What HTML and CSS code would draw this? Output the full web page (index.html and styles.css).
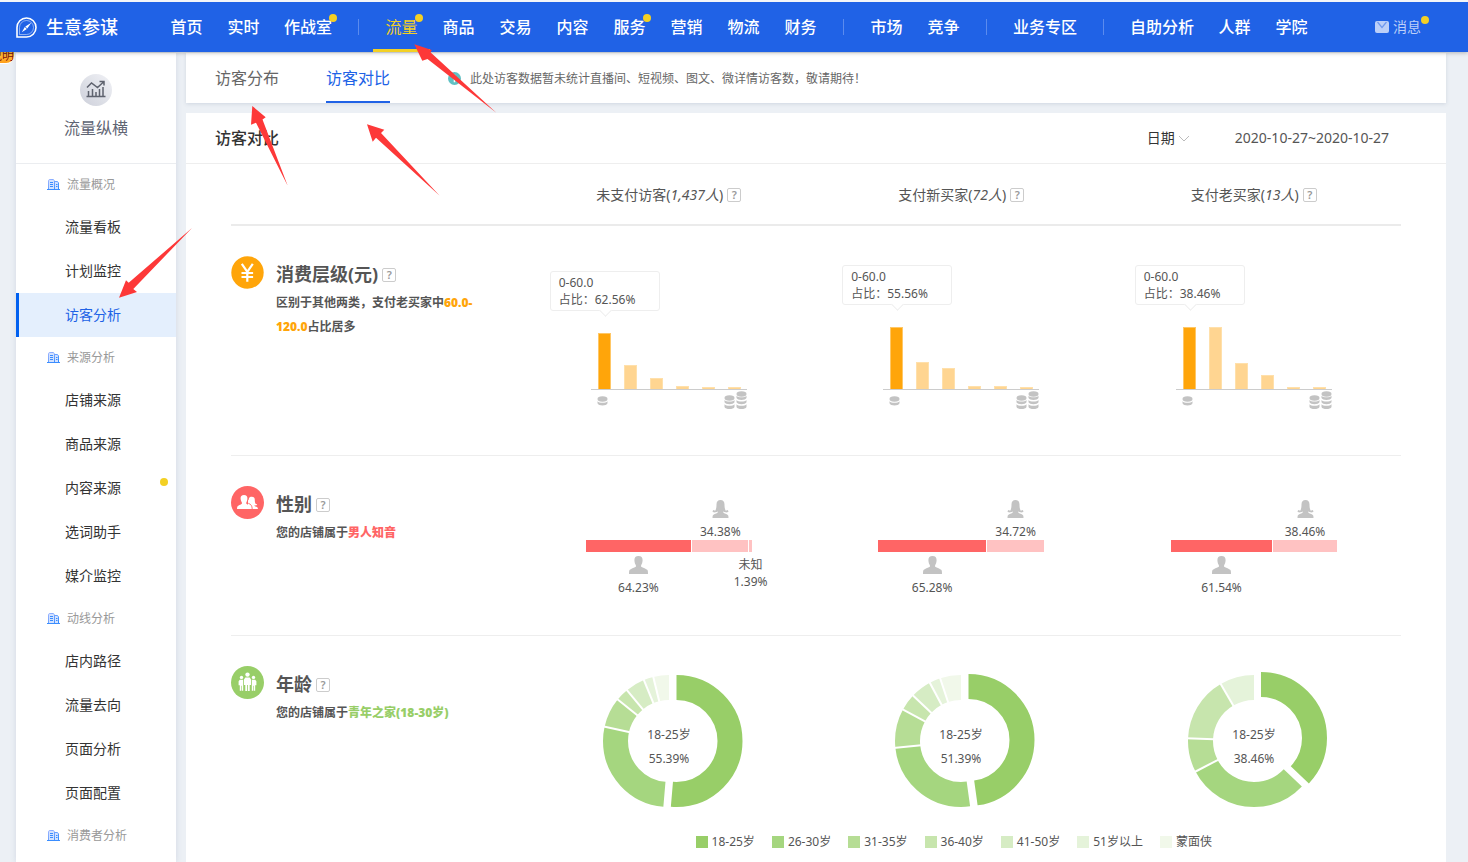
FILE: index.html
```html
<!DOCTYPE html>
<html lang="zh-CN">
<head>
<meta charset="utf-8">
<title>生意参谋 - 访客对比</title>
<link rel="stylesheet" href="styles.css">
</head>
<body>
<svg class="sprite" aria-hidden="true">
  <defs>
    <linearGradient id="tower" x1="0" y1="0" x2="1" y2="1"><stop offset="0" stop-color="#9db4ff"/><stop offset="1" stop-color="#2f8bff"/></linearGradient>
  </defs>
  <symbol id="i-building" viewBox="0 0 13 12">
    <path d="M1 10.500V1.500L2 .5h4.500l1 1V3h3l1.500 1.500v6z" fill="#d3e2ff"/>
    <path d="M1.500 10.500V1.800L2.300 .5h3.900l1.300 1.300v8.700M7.500 2.500h3l1 1.500v6.500" fill="none" stroke="url(#tower)"/>
    <path d="M0 10.500h13M3 3.500h3M3 5.500h3M3 7.500h3M9 5.500h1.500M9 7.500h1.500" fill="none" stroke="#3a8dff"/>
  </symbol>
  <symbol id="i-coin" viewBox="0 0 11 10">
    <ellipse cx="5.500" cy="3" rx="5" ry="2.800"/><path d="M.5 5.300c1.500 2 8.500 2 10 0V7.200c-1 2.900-9 2.900-10 0z"/>
  </symbol>
  <symbol id="i-coins" viewBox="0 0 23 19">
    <ellipse cx="5.500" cy="7" rx="5" ry="2.800"/>
    <path d="M.5 9c1.500 2 8.500 2 10 0v2.300c-1 2.600-9 2.600-10 0zM.5 13.200c1.500 2 8.500 2 10 0v2.800c-1 2.800-9 2.800-10 0z"/>
    <ellipse cx="17.500" cy="3" rx="5" ry="2.800"/>
    <path d="M12.500 4.800c1.500 2 8.500 2 10 0v2.300c-1 2.600-9 2.600-10 0zM12.500 9c1.500 2 8.500 2 10 0v2.300c-1 2.600-9 2.600-10 0zM12.500 13.200c1.500 2 8.500 2 10 0v2.800c-1 2.800-9 2.800-10 0z"/>
  </symbol>
  <symbol id="i-male" viewBox="0 0 19 18">
    <path d="M9.500 0c2.800 0 4.200 1.500 4.100 4.200-.1 2.200-.7 3.900-1.500 5.100v1.400c1.800 1.200 5.300 1.900 6.400 3.400.4.700.5 2.200.5 3.900H0c0-1.700.1-3.200.5-3.900 1.100-1.500 4.600-2.200 6.400-3.400V9.300C6.100 8.100 5.500 6.400 5.400 4.200 5.300 1.500 6.700 0 9.500 0z"/>
  </symbol>
  <symbol id="i-female" viewBox="0 0 17 18">
    <path d="M8.500 0c2.700 0 4 1.700 4 4.500 0 2.600.3 4.700 1.300 6.200l1.900-.6.900 1.300-1.600 1.100-2.800-.6-.8-.6v1.500c1.800.9 4.300 1.600 4.800 2.600.2.600.3 1.500.3 2.600H.5c0-1.100.1-2 .3-2.600.5-1 3-1.700 4.800-2.600v-1.500l-.8.6-2.800.6L.4 11.400l.9-1.300 1.900.6c1-1.500 1.300-3.600 1.300-6.200C4.500 1.700 5.800 0 8.500 0z"/>
  </symbol>
</svg>

<header class="topbar">
  <a class="brand" href="#">
    <svg width="21" height="21" viewBox="0 0 21 21" fill="none" stroke="#fff"><path d="M1 20V10.500A9.500 9.500 0 1 1 10.500 20z" stroke-width="1.600"/><path d="M3.500 17.500v-7a7 7 0 1 1 7 7z" stroke-width=".7" opacity=".7"/><path d="M15.300 5.800 9.300 9.600l2 2zM5.800 15.300l3-5.200 2 2z" fill="#fff" stroke="none"/></svg>
    生意参谋
  </a>
  <nav class="nav">
    <a href="#">首页</a><a href="#">实时</a><a href="#"><span class="dotted">作战室</span></a>
    <i class="sep"></i>
    <a class="on" href="#"><span class="dotted">流量</span></a><a href="#">商品</a><a href="#">交易</a><a href="#">内容</a><a href="#"><span class="dotted">服务</span></a><a href="#">营销</a><a href="#">物流</a><a href="#">财务</a>
    <i class="sep"></i>
    <a href="#">市场</a><a href="#">竞争</a>
    <i class="sep"></i>
    <a href="#">业务专区</a>
    <i class="sep"></i>
    <a href="#">自助分析</a><a href="#">人群</a><a href="#">学院</a>
  </nav>
  <a class="message" href="#">
    <svg width="14" height="12" viewBox="0 0 14 12"><rect width="14" height="12" rx="2" fill="#bccff8"/><path d="m2.500 1 4.500 5.500L11.500 1" fill="none" stroke="#6f98ef" stroke-width="1.200"/></svg>
    <span class="dotted">消息</span>
  </a>
</header>

<div class="flag" aria-hidden="true"><span>说明</span></div>

<div class="page">
  <aside class="side">
    <div class="side-head">
      <svg width="32" height="32" viewBox="0 0 32 32"><defs><linearGradient id="disc" x1="1" y1="0" x2="0" y2="1"><stop offset="0" stop-color="#f1f2f6"/><stop offset="1" stop-color="#cdd0da"/></linearGradient></defs><circle cx="16" cy="16" r="16" fill="url(#disc)"/><path d="M6.500 22.500h19M8.500 22v-5M12.500 22v-7M16 22v-4M19.500 22v-7M23 22v-9M7 13.500l4.500-4.500 6 4.500 6-5.500M19.500 7.500h4.500v4" fill="none" stroke="#5e626e" stroke-width="1.500"/></svg>
      <span>流量纵横</span>
    </div>
    <nav>
      <h2><svg width="13" height="12"><use href="#i-building"/></svg>流量概况</h2>
      <a href="#">流量看板</a><a href="#">计划监控</a><a class="on" href="#">访客分析</a>
      <h2><svg width="13" height="12"><use href="#i-building"/></svg>来源分析</h2>
      <a href="#">店铺来源</a><a href="#">商品来源</a><a class="new" href="#">内容来源</a><a href="#">选词助手</a><a href="#">媒介监控</a>
      <h2><svg width="13" height="12"><use href="#i-building"/></svg>动线分析</h2>
      <a href="#">店内路径</a><a href="#">流量去向</a><a href="#">页面分析</a><a href="#">页面配置</a>
      <h2><svg width="13" height="12"><use href="#i-building"/></svg>消费者分析</h2>
    </nav>
  </aside>

  <main class="main">
    <div class="tabs">
      <a href="#">访客分布</a>
      <a class="on" href="#">访客对比</a>
      <p class="notice"><svg width="13" height="13" viewBox="0 0 13 13"><circle cx="6.500" cy="6.500" r="6.500" fill="#5fc1c4"/><path d="M6.500 2.800v1.600M6.500 5.500v4.700" stroke="#fff" stroke-width="1.600"/></svg>此处访客数据暂未统计直播间、短视频、图文、微详情访客数，敬请期待！</p>
    </div>

    <section class="panel">
      <div class="panel-head">
        <h1>访客对比</h1>
        <button class="period" type="button">日期<svg width="12" height="7" viewBox="0 0 12 7"><path d="m1 1 5 5 5-5" fill="none" stroke="#bbb"/></svg></button>
        <time>2020-10-27~2020-10-27</time>
      </div>

      <table class="compare">
        <thead>
          <tr>
            <td></td>
            <th>未支付访客(<em>1,437人</em>)<button class="help" type="button">?</button></th>
            <th>支付新买家(<em>72人</em>)<button class="help" type="button">?</button></th>
            <th>支付老买家(<em>13人</em>)<button class="help" type="button">?</button></th>
          </tr>
        </thead>
        <tbody>
          <tr class="row-spend">
            <th>
              <div class="topic">
                <svg width="33" height="33" viewBox="0 0 33 33"><circle cx="16.500" cy="16.500" r="16.200" fill="#ffa50a"/><path d="M10.800 7.800l5.500 8 5.500-8M16.300 15.500v10.300M10.500 17h11.600M10.500 21h11.600" fill="none" stroke="#fff" stroke-width="2.200"/></svg>
                <div><h3>消费层级(元)<button class="help" type="button">?</button></h3><p>区别于其他两类，支付老买家中<b class="orange">60.0-120.0</b>占比居多</p></div>
              </div>
            </th>
            <td>
              <div class="chart">
                <div class="bars"><i class="hot" style="height:56px"><span class="tip">0-60.0<br>占比：62.56%</span></i><i style="height:24px"></i><i style="height:11px"></i><i style="height:3px"></i><i style="height:2px"></i><i style="height:2px"></i></div>
                <div class="axis"><svg width="11" height="10"><use href="#i-coin"/></svg><svg width="23" height="19"><use href="#i-coins"/></svg></div>
              </div>
            </td>
            <td>
              <div class="chart">
                <div class="bars"><i class="hot" style="height:62px"><span class="tip">0-60.0<br>占比：55.56%</span></i><i style="height:27px"></i><i style="height:21px"></i><i style="height:3px"></i><i style="height:3px"></i><i style="height:2px"></i></div>
                <div class="axis"><svg width="11" height="10"><use href="#i-coin"/></svg><svg width="23" height="19"><use href="#i-coins"/></svg></div>
              </div>
            </td>
            <td>
              <div class="chart">
                <div class="bars"><i class="hot" style="height:62px"><span class="tip">0-60.0<br>占比：38.46%</span></i><i style="height:62px"></i><i style="height:26px"></i><i style="height:14px"></i><i style="height:2px"></i><i style="height:2px"></i></div>
                <div class="axis"><svg width="11" height="10"><use href="#i-coin"/></svg><svg width="23" height="19"><use href="#i-coins"/></svg></div>
              </div>
            </td>
          </tr>
          <tr class="row-gender">
            <th>
              <div class="topic">
                <svg width="33" height="33" viewBox="0 0 33 33"><circle cx="16.500" cy="16.500" r="16.500" fill="#ff6565"/><path d="M20.800 10.800c2 0 3 1.200 3 3.200 0 1.800.3 3 1 3.900l1.400.3-.6 1-2.200.2v.6c1.400.6 2.900.9 3.300 1.700.1.300.2.700.2 1.300H17v-8.500c.6-.5.8-1.100.9-2 .2-1.100 1.200-1.700 2.900-1.700z" fill="#fff"/><path d="M13 9c2.400 0 3.500 1.300 3.400 3.600-.1 1.800-.5 3-1.100 3.900v1.200c1.400 1.100 4.100 1.500 4.900 2.700.3.700.4 1.600.4 2.600H6c0-1 .1-1.900.4-2.600.8-1.200 3.300-1.600 4.500-2.700v-1.200c-.6-.9-1.200-2.100-1.300-3.900C9.500 10.300 10.600 9 13 9z" fill="#fff"/><path d="M17.300 17.300c2.800 1 3.800 2.500 3.900 5.700" fill="none" stroke="#ff6565" stroke-width=".9"/></svg>
                <div><h3>性别<button class="help" type="button">?</button></h3><p>您的店铺属于<b class="red">男人知音</b></p></div>
              </div>
            </th>
            <td>
              <div class="split">
                <div class="part male" style="flex-grow:64.23"><div class="up"></div><i></i><div class="down"><svg width="19" height="18"><use href="#i-male"/></svg>64.23%</div></div>
                <div class="part female" style="flex-grow:34.38"><div class="up"><svg width="17" height="18"><use href="#i-female"/></svg>34.38%</div><i></i></div>
                <div class="part unknown" style="flex-grow:1.39"><div class="up"></div><i></i><div class="down"><span>未知</span>1.39%</div></div>
              </div>
            </td>
            <td>
              <div class="split">
                <div class="part male" style="flex-grow:65.28"><div class="up"></div><i></i><div class="down"><svg width="19" height="18"><use href="#i-male"/></svg>65.28%</div></div>
                <div class="part female" style="flex-grow:34.72"><div class="up"><svg width="17" height="18"><use href="#i-female"/></svg>34.72%</div><i></i></div>
              </div>
            </td>
            <td>
              <div class="split">
                <div class="part male" style="flex-grow:61.54"><div class="up"></div><i></i><div class="down"><svg width="19" height="18"><use href="#i-male"/></svg>61.54%</div></div>
                <div class="part female" style="flex-grow:38.46"><div class="up"><svg width="17" height="18"><use href="#i-female"/></svg>38.46%</div><i></i></div>
              </div>
            </td>
          </tr>
          <tr class="row-age">
            <th>
              <div class="topic">
                <svg width="33" height="33" viewBox="0 0 33 33"><circle cx="16.500" cy="16.500" r="16.500" fill="#98ce68"/><g fill="#fff"><circle cx="16.500" cy="8.600" r="2.200"/><circle cx="10.500" cy="11.400" r="1.700"/><circle cx="22.500" cy="11.400" r="1.700"/><path d="M14.300 11.500h4.400l1.300 2v5.500h-1.300V25h-1.800v-6h-.8v6h-1.800v-6H13v-5.500zM8.800 13.800h3.400v11h-1.400v-5h-.6v5H8.800v-5.500H7.600v-4zM20.800 13.800h3.400l1.200 1.500v4h-1.200v5.500h-1.400v-5h-.6v5h-1.400z"/></g></svg>
                <div><h3>年龄<button class="help" type="button">?</button></h3><p>您的店铺属于<b class="green">青年之家(18-30岁)</b></p></div>
              </div>
            </th>
            <td>
              <svg class="donut" width="150" height="150" viewBox="-75 -75 150 150">
                <g class="ring">
                  <circle class="a2" r="53.500" pathLength="360" stroke-dasharray="97.600 262.400" stroke-dashoffset="-185"/>
                  <circle class="a3" r="53.500" pathLength="360" stroke-dasharray="26.400 333.600" stroke-dashoffset="-282.600"/>
                  <circle class="a4" r="53.500" pathLength="360" stroke-dasharray="11.400 348.600" stroke-dashoffset="-309"/>
                  <circle class="a5" r="53.500" pathLength="360" stroke-dasharray="17.200 342.800" stroke-dashoffset="-320.400"/>
                  <circle class="a6" r="53.500" pathLength="360" stroke-dasharray="8.600 351.400" stroke-dashoffset="-337.600"/>
                  <circle class="a7" r="53.500" pathLength="360" stroke-dasharray="13.800 346.200" stroke-dashoffset="-346.200"/>
                </g>
                <g class="gaps"><path d="M0-40V-68" transform="rotate(282.600)"/><path d="M0-40V-68" transform="rotate(309)"/><path d="M0-40V-68" transform="rotate(320.400)"/><path d="M0-40V-68" transform="rotate(337.600)"/><path d="M0-40V-68" transform="rotate(346.200)"/></g>
                <g class="ring" transform="translate(7.500 0)"><circle class="a1" r="53.500" pathLength="360" stroke-dasharray="185 175"/></g>
                <text y="-2">18-25岁</text><text y="22">55.39%</text>
              </svg>
            </td>
            <td>
              <svg class="donut" width="150" height="150" viewBox="-75 -75 150 150">
                <g class="ring">
                  <circle class="a2" r="53.500" pathLength="360" stroke-dasharray="92 268" stroke-dashoffset="-172"/>
                  <circle class="a3" r="53.500" pathLength="360" stroke-dasharray="34.500 325.500" stroke-dashoffset="-264"/>
                  <circle class="a4" r="53.500" pathLength="360" stroke-dasharray="15 345" stroke-dashoffset="-298.500"/>
                  <circle class="a5" r="53.500" pathLength="360" stroke-dasharray="18.300 341.700" stroke-dashoffset="-313.500"/>
                  <circle class="a6" r="53.500" pathLength="360" stroke-dasharray="9.800 350.200" stroke-dashoffset="-331.800"/>
                  <circle class="a7" r="53.500" pathLength="360" stroke-dasharray="18.400 341.600" stroke-dashoffset="-341.600"/>
                </g>
                <g class="gaps"><path d="M0-40V-68" transform="rotate(264)"/><path d="M0-40V-68" transform="rotate(298.500)"/><path d="M0-40V-68" transform="rotate(313.500)"/><path d="M0-40V-68" transform="rotate(331.800)"/><path d="M0-40V-68" transform="rotate(341.600)"/></g>
                <g class="ring" transform="translate(7.500 -1)"><circle class="a1" r="53.500" pathLength="360" stroke-dasharray="172 188"/></g>
                <text y="-2">18-25岁</text><text y="22">51.39%</text>
              </svg>
            </td>
            <td>
              <svg class="donut" width="150" height="150" viewBox="-75 -75 150 150">
                <g class="ring">
                  <circle class="a2" r="53.500" pathLength="360" stroke-dasharray="108.900 251.100" stroke-dashoffset="-133.500"/>
                  <circle class="a3" r="53.500" pathLength="360" stroke-dasharray="30 330" stroke-dashoffset="-242.400"/>
                  <circle class="a4" r="53.500" pathLength="360" stroke-dasharray="57.300 302.700" stroke-dashoffset="-272.400"/>
                  <circle class="a6" r="53.500" pathLength="360" stroke-dasharray="30.300 329.700" stroke-dashoffset="-329.700"/>
                </g>
                <g class="gaps"><path d="M0-40V-68" transform="rotate(242.400)"/><path d="M0-40V-68" transform="rotate(272.400)"/><path d="M0-40V-68" transform="rotate(329.700)"/></g>
                <g class="ring" transform="translate(7 -3)"><circle class="a1" r="53.500" pathLength="360" stroke-dasharray="133.500 226.500"/></g>
                <text y="-2">18-25岁</text><text y="22">38.46%</text>
              </svg>
            </td>
          </tr>
        </tbody>
        <tfoot>
          <tr>
            <td></td>
            <td colspan="3">
              <ul class="legend">
                <li><i class="a1"></i>18-25岁</li><li><i class="a2"></i>26-30岁</li><li><i class="a3"></i>31-35岁</li><li><i class="a4"></i>36-40岁</li><li><i class="a5"></i>41-50岁</li><li><i class="a6"></i>51岁以上</li><li><i class="a7"></i>蒙面侠</li>
              </ul>
            </td>
          </tr>
        </tfoot>
      </table>
    </section>
  </main>
</div>

<svg class="arrows" width="500" height="300" viewBox="0 0 500 300" aria-hidden="true">
  <path d="M414.300 44.300 431.700 50l-1 2.500 65.600 60.200L427.500 59l-5.200 1.800z"/>
  <path d="M252.300 106l13.400 11.300-3.200 2.200 25.200 66.200L256 122.700l-5 2z"/>
  <path d="M367 124.300l17.300 5.500-3.300 3.200 58.700 62.700-63.700-58-3.300 4z"/>
  <path d="M119 297.700l7-17.400 2.700 2.400L192 228l-58.700 61 3.700 3z"/>
</svg>
</body>
</html>
```
FILE: styles.css
```css
* { box-sizing: border-box; }

body {
  margin: 0;
  min-height: 100vh;
  display: flex;
  flex-direction: column;
  position: relative;
  background: #ecf0f5;
  color: #555;
  font: 12px/17px "Noto Sans", "Noto Sans CJK SC", sans-serif;
}

a { color: inherit; text-decoration: none; }
h1, h2, h3, p, ul { margin: 0; padding: 0; }
i, em { display: inline-block; }
button { padding: 0; border: 0; background: none; font: inherit; color: inherit; }
.sprite { position: absolute; width: 0; height: 0; }

/* top navigation */
.topbar {
  display: flex;
  align-items: center;
  height: 52px;
  padding: 0 42px 0 16px;
  border-top: 2px solid #f3f5f8;
  background: #2062e6;
  box-shadow: 0 1px 4px rgba(0, 0, 0, .25);
  color: #fff;
  position: relative;
  z-index: 2;
}
.brand {
  display: flex;
  align-items: center;
  gap: 9px;
  width: 142px;
  font-size: 18px;
  font-weight: 500;
  line-height: 24px;
  white-space: nowrap;
}
.nav { display: flex; align-items: center; }
.nav a {
  min-width: 57px;
  height: 50px;
  padding: 0 12px;
  border-bottom: 3px solid transparent;
  font-size: 16px;
  font-weight: 500;
  line-height: 50px;
  text-align: center;
  white-space: nowrap;
}
.nav a.on { border-color: #f3d024; color: #f3d024; font-weight: 400; }
.sep { width: 1px; height: 16px; margin: 0 14px; background: #5b8bee; }
.dotted { position: relative; }
.dotted::after {
  content: "";
  position: absolute;
  top: -2px;
  right: -5px;
  width: 8px;
  height: 8px;
  border-radius: 50%;
  background: #f3d024;
}
.message {
  display: flex;
  align-items: center;
  gap: 4px;
  margin-left: auto;
  padding-right: 5px;
  color: #bccff8;
  font-size: 14px;
  line-height: 20px;
}
.message .dotted::after { top: -1px; right: -8px; }

.flag {
  position: absolute;
  top: 47px;
  left: 0;
  width: 14px;
  height: 17px;
  overflow: hidden;
  display: flex;
  justify-content: flex-end;
  border-radius: 0 0 8px 0;
  border-bottom: 1px solid #fff;
  background: linear-gradient(#ffd34d, #ff9f1a);
  color: #7a1010;
  white-space: nowrap;
}

/* page frame */
.page {
  flex: 1;
  display: flex;
  gap: 10px;
  padding: 1px 22px 0 16px;
}
.side {
  flex: 0 0 160px;
  background: #fff;
  box-shadow: 0 0 6px rgba(60, 80, 120, .14);
}
.side-head {
  display: flex;
  flex-direction: column;
  align-items: center;
  gap: 10px;
  height: 111px;
  padding-top: 21px;
  border-bottom: 1px solid #ebedf0;
  color: #5f6573;
  font-size: 16px;
  line-height: 24px;
}
.side h2 {
  display: flex;
  align-items: center;
  gap: 7px;
  height: 41px;
  padding-left: 31px;
  color: #999;
  font-size: 12px;
  font-weight: 400;
}
.side nav a {
  display: block;
  position: relative;
  height: 44px;
  padding-left: 46px;
  border-left: 3px solid transparent;
  color: #333;
  font-size: 14px;
  line-height: 44px;
}
.side nav a.on { border-color: #0060f0; background: #e4effd; color: #2062e6; }
.side nav a.new::after {
  content: "";
  position: absolute;
  top: 12px;
  right: 8px;
  width: 8px;
  height: 8px;
  border-radius: 50%;
  background: #f3d024;
}

.main { flex: 1; min-width: 0; display: flex; flex-direction: column; gap: 10px; }
.tabs {
  display: flex;
  gap: 47px;
  height: 50px;
  padding-left: 29px;
  background: #fff;
  box-shadow: 0 1px 4px rgba(60, 80, 120, .16);
  color: #666;
}
.tabs a { font-size: 16px; line-height: 50px; }
.tabs a.on { border-bottom: 2px solid #2062e6; color: #2062e6; }
.notice { display: flex; align-items: center; gap: 9px; padding-left: 11px; }

.panel { flex: 1; background: #fff; }
.panel-head {
  display: flex;
  align-items: center;
  height: 51px;
  padding: 0 57px 0 29px;
  border-bottom: 1px solid #eee;
  font-size: 14px;
  line-height: 20px;
}
.panel-head h1 { margin-right: auto; color: #333; font-size: 16px; font-weight: 500; line-height: 24px; }
.period { display: flex; align-items: center; gap: 3px; margin-right: 45px; color: #333; }

/* comparison table */
.compare {
  width: calc(100% - 90px);
  margin: 0 45px;
  border-collapse: separate;
  border-spacing: 0;
  table-layout: fixed;
}
.compare th, .compare td { padding: 0; font-weight: 400; text-align: left; vertical-align: top; }
.compare thead th, .compare thead td {
  height: 62px;
  padding-right: 2px;
  border-bottom: 2px solid #ebebeb;
  font-size: 14px;
  text-align: center;
  vertical-align: middle;
}
.compare em { display: inline; font-style: italic; }
.compare tbody th, .compare tbody td { padding-top: 30px; }
.compare tbody td { padding-right: 2px; }
.row-spend > * { height: 230px; border-bottom: 1px solid #eee; }
.row-gender > * { height: 180px; border-bottom: 1px solid #eee; }

.help {
  width: 14px;
  height: 14px;
  margin-left: 4px;
  border: 1px solid #ccc;
  border-radius: 2px;
  color: #999;
  font-size: 11px;
  font-weight: 600;
  line-height: 12px;
  vertical-align: 1px;
}

.topic { display: flex; gap: 12px; }
.topic > svg { flex: none; }
.topic > div { width: 204px; padding-top: 6px; }
.topic h3 { height: 24px; margin-bottom: 5px; font-size: 18px; font-weight: 700; line-height: 24px; }
.topic .help { vertical-align: 2px; }
.topic p { font-weight: 700; line-height: 24px; }
.orange { color: #ffa50a; }
.red { color: #ff6565; }
.green { color: #98ce68; }

/* spending bars */
.chart { width: 156px; margin: 0 auto; }
.bars {
  display: flex;
  align-items: flex-end;
  gap: 13px;
  height: 134px;
  padding-left: 7px;
  border-bottom: 1px solid #ccc;
}
.bars i {
  position: relative;
  width: 13px;
  border: 1px solid #ffe0ab;
  border-bottom: 0;
  background: #ffd591;
  font-style: normal;
}
.bars .hot { background: #ffa50a; border-color: #ffc766; }
.tip {
  position: absolute;
  bottom: calc(100% + 23px);
  left: -49px;
  width: 110px;
  padding: 2px 8px;
  border: 1px solid #eee;
  border-radius: 3px;
  background: #fff;
  white-space: nowrap;
}
.tip::after {
  content: "";
  position: absolute;
  bottom: -5px;
  left: 50px;
  width: 8px;
  height: 8px;
  border: solid #eee;
  border-width: 0 1px 1px 0;
  background: #fff;
  transform: rotate(45deg);
}
.axis {
  display: flex;
  align-items: center;
  justify-content: space-between;
  padding: 1px 0 0 6px;
  fill: #c3c3c3;
}

/* gender split */
.split { display: flex; gap: 1px; width: 166px; margin: 0 auto; }
.part { display: flex; flex: 1 1 0; flex-direction: column; align-items: center; min-width: 0; }
.part > i { width: 100%; height: 12px; background: #ffc2c2; }
.male > i { background: #ff6565; }
.part svg { fill: #c3c3c3; }
.up { display: flex; flex-direction: column; align-items: center; gap: 5px; height: 54px; padding-top: 14px; }
.down { display: flex; flex-direction: column; align-items: center; padding-top: 4px; white-space: nowrap; }
.down svg { margin-bottom: 5px; }

/* age rings */
.donut { display: block; margin: 0 auto; }
.ring circle { fill: none; stroke-width: 25; transform: rotate(-90deg); }
.gaps { stroke: #fff; stroke-width: 2; }
.donut text { fill: #555; font-size: 12px; text-anchor: middle; }
.a1 { stroke: #98ce68; background: #98ce68; }
.a2 { stroke: #a5d67f; background: #a5d67f; }
.a3 { stroke: #b6dd95; background: #b6dd95; }
.a4 { stroke: #c7e5ad; background: #c7e5ad; }
.a5 { stroke: #d6ecc4; background: #d6ecc4; }
.a6 { stroke: #e5f3da; background: #e5f3da; }
.a7 { stroke: #f1f8ea; background: #f1f8ea; }
.legend { display: flex; justify-content: center; padding-top: 17px; list-style: none; }
.legend li { display: flex; align-items: center; gap: 4px; margin-right: 17px; }
.legend i { width: 12px; height: 12px; }

/* pointer marks over the page */
.arrows { position: absolute; top: 0; left: 0; z-index: 3; fill: #fd3838; pointer-events: none; }
```
